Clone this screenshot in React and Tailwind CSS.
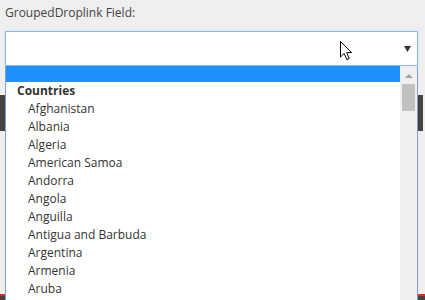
import React from "react";

const COUNTRIES = [
  "Afghanistan",
  "Albania",
  "Algeria",
  "American Samoa",
  "Andorra",
  "Angola",
  "Anguilla",
  "Antigua and Barbuda",
  "Argentina",
  "Armenia",
  "Aruba",
];

export default function App() {
  return (
    <div className="relative h-[300px] w-[425px] overflow-hidden bg-[#efefef] font-['Open_Sans',sans-serif] text-[12px] text-[#333]">
      {/* label */}
      <div className="px-[5px] pt-[4px] leading-[18px] text-[#444]">GroupedDroplink Field:</div>

      {/* select box */}
      <div className="ml-[5px] mt-[9px] flex h-[35px] w-[413px] items-center justify-end rounded-[1px] border border-[#8db5e8] bg-white pr-[6px] shadow-[0_0_2px_#b9d3f3]">
        <svg width="7" height="6" viewBox="0 0 7 6">
          <path d="M0 0 H7 L3.5 6 Z" fill="#333" />
        </svg>
      </div>

      {/* page content behind the open list */}
      <div className="mt-[29px] h-[36px] w-[423px] bg-[#444]" />
      <div className="mt-[163px] h-[2px] w-full bg-[#e02b20]" />
      <div className="h-[10px] w-full bg-[#444]" />

      {/* open dropdown list */}
      <div className="absolute bottom-0 left-[5px] top-[66px] flex w-[413px] border-x border-[#7d9fd9] bg-white">
        <div className="flex-1 overflow-hidden">
          <div className="h-[16px] bg-[#1e90ff]" />
          <div className="pl-[11px] font-bold leading-[18px]">Countries</div>
          {COUNTRIES.map((c) => (
            <div key={c} className="pl-[22px] leading-[18px]">
              {c}
            </div>
          ))}
        </div>

        {/* scrollbar */}
        <div className="flex w-[17px] flex-col items-center bg-[#f0f0f0]">
          <svg className="mt-[8px]" width="8" height="4" viewBox="0 0 8 4">
            <path d="M0 4 L4 0 L8 4 Z" fill="#a3a3a3" />
          </svg>
          <div className="mt-[6px] h-[27px] w-[13px] bg-[#c1c1c1]" />
        </div>
      </div>

      {/* mouse cursor */}
      <svg
        className="absolute left-[340px] top-[41px]"
        width="13"
        height="20"
        viewBox="0 0 13 20"
      >
        <path
          d="M0.5 0.5 V16 L4.2 12.4 L6.8 18.6 L9.2 17.6 L6.7 11.6 H11.6 Z"
          fill="white"
          stroke="black"
          strokeWidth="1"
          strokeLinejoin="miter"
        />
      </svg>
    </div>
  );
}
